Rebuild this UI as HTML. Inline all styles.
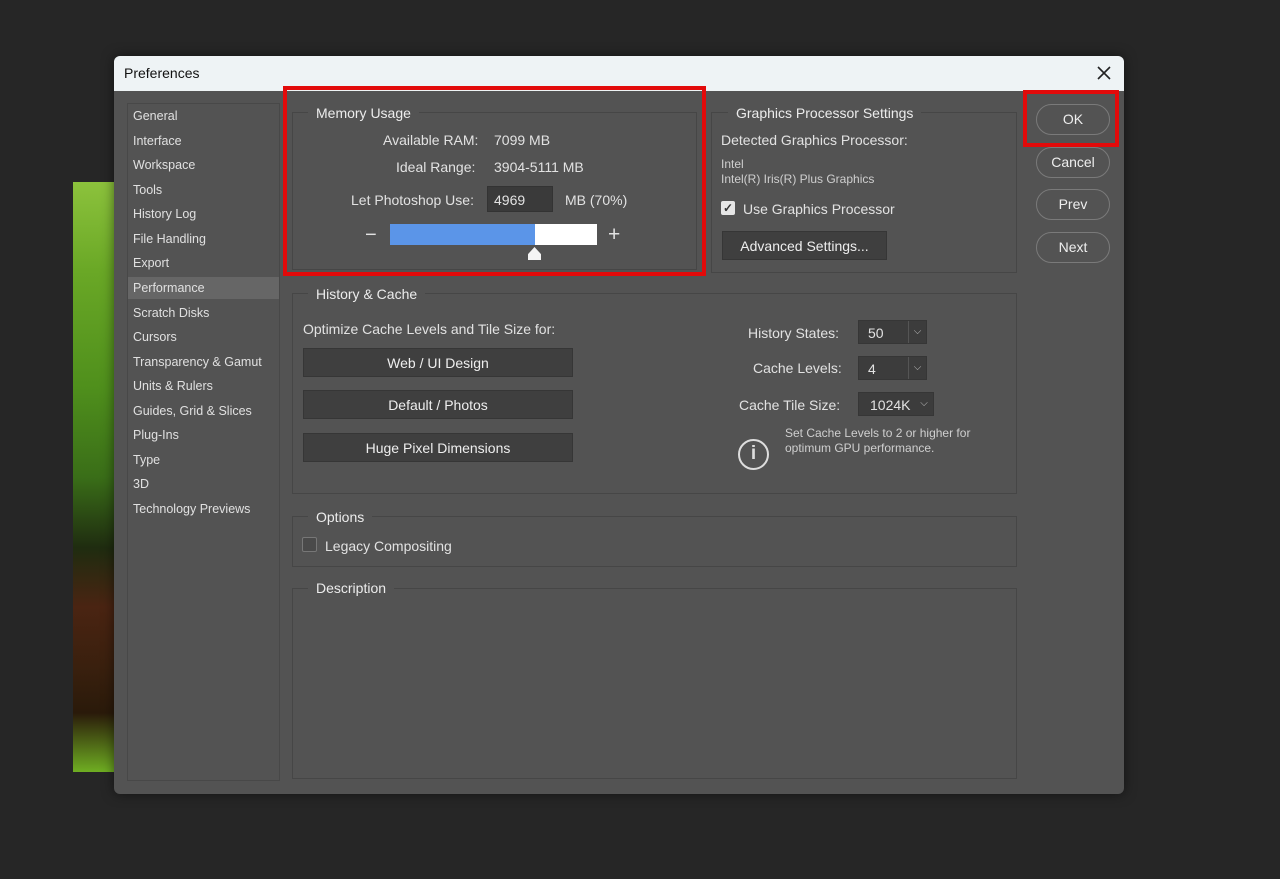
<!DOCTYPE html>
<html><head><style>
*{margin:0;padding:0;box-sizing:border-box}
body{width:1280px;height:879px;background:#262626;font-family:"Liberation Sans",sans-serif;color:#e2e2e2;position:relative;overflow:hidden;font-size:14px}
.a{position:absolute;white-space:nowrap}
.img{left:73px;top:182px;width:45px;height:590px;background:linear-gradient(180deg,#8cc23c 0%,#6aa826 15%,#4f8f1c 35%,#3a6e18 50%,#1f2c10 62%,#4a2412 72%,#3a200e 82%,#2a1a0a 90%,#6fae22 100%)}
.dlg{left:114px;top:56px;width:1010px;height:738px;background:#535353;border-radius:6px;overflow:hidden;box-shadow:0 0 12px rgba(0,0,0,.5)}
.title{left:0;top:0;width:1010px;height:35px;background:#eef3f5;color:#111;font-size:14px;padding:9px 10px}
.side{left:127px;top:103px;width:153px;height:678px;border:1px solid #484848}
.si{left:133px;font-size:12.5px;color:#e0e0e0}
.grp{border:1px solid #464646}
.lg{background:#535353;padding:0 8px;font-size:14px;color:#ececec}
.btn{background:#3f3f3f;border:1px solid #363636;text-align:center;font-size:14px;color:#eee;line-height:29px}
.pill{left:1036px;width:74px;height:31px;border:1.5px solid #7a7a7a;border-radius:16px;text-align:center;line-height:29px;font-size:14px;color:#eee}
.red{border:4px solid #e20a0a}
.sel{background:#3c3c3c;border:1px solid #363636;font-size:14px;padding:4px 9px;height:24px}
.sel b{position:absolute;right:0;top:0;width:18px;height:22px;border-left:1px solid #555;font-weight:normal;font-size:10px;text-align:center;line-height:22px;color:#bbb}
</style></head><body>
<div class="a img"></div>
<div class="a dlg"><div class="a title">Preferences</div>
<svg class="a" style="right:13px;top:10px" width="14" height="14"><path d="M1 1L13 13M13 1L1 13" stroke="#222" stroke-width="1.6"/></svg></div>

<div class="a side"></div>
<div class="a" style="left:128px;top:277px;width:151px;height:22px;background:#666"></div>
<div class="a si" style="top:109px">General</div>
<div class="a si" style="top:134px">Interface</div>
<div class="a si" style="top:158px">Workspace</div>
<div class="a si" style="top:183px">Tools</div>
<div class="a si" style="top:207px">History Log</div>
<div class="a si" style="top:232px">File Handling</div>
<div class="a si" style="top:256px">Export</div>
<div class="a si" style="top:281px">Performance</div>
<div class="a si" style="top:306px">Scratch Disks</div>
<div class="a si" style="top:330px">Cursors</div>
<div class="a si" style="top:355px">Transparency &amp; Gamut</div>
<div class="a si" style="top:379px">Units &amp; Rulers</div>
<div class="a si" style="top:404px">Guides, Grid &amp; Slices</div>
<div class="a si" style="top:428px">Plug-Ins</div>
<div class="a si" style="top:453px">Type</div>
<div class="a si" style="top:477px">3D</div>
<div class="a si" style="top:502px">Technology Previews</div>

<!-- Memory -->
<div class="a grp" style="left:292px;top:112px;width:405px;height:158px"></div>
<div class="a lg" style="left:308px;top:105px">Memory Usage</div>
<div class="a" style="left:383px;top:132px">Available RAM:</div>
<div class="a" style="left:494px;top:132px">7099 MB</div>
<div class="a" style="left:396px;top:159px">Ideal Range:</div>
<div class="a" style="left:494px;top:159px">3904-5111 MB</div>
<div class="a" style="left:351px;top:192px">Let Photoshop Use:</div>
<div class="a" style="left:487px;top:186px;width:66px;height:26px;background:#3a3a3a;border:1px solid #333;padding:5px 6px">4969</div>
<div class="a" style="left:565px;top:192px">MB (70%)</div>
<div class="a" style="left:365px;top:224px;font-size:20px">−</div>
<div class="a" style="left:390px;top:224px;width:207px;height:21px;background:#fff"></div>
<div class="a" style="left:390px;top:224px;width:145px;height:21px;background:#5b95e8"></div>
<div class="a" style="left:528px;top:247px;width:13px;height:13px;background:#f4f4f4;clip-path:polygon(50% 0,100% 55%,100% 100%,0 100%,0 55%)"></div>
<div class="a" style="left:608px;top:223px;font-size:21px">+</div>
<div class="a red" style="left:283px;top:86px;width:423px;height:190px"></div>

<!-- GPU -->
<div class="a grp" style="left:711px;top:112px;width:306px;height:161px"></div>
<div class="a lg" style="left:728px;top:105px">Graphics Processor Settings</div>
<div class="a" style="left:721px;top:132px">Detected Graphics Processor:</div>
<div class="a" style="left:721px;top:157px;font-size:12px;color:#cfcfcf;line-height:15px">Intel<br>Intel(R) Iris(R) Plus Graphics</div>
<div class="a" style="left:721px;top:201px;width:14px;height:14px;background:#e6e6e6;border-radius:2px;color:#333;font-size:12px;text-align:center;line-height:14px;font-weight:bold">✓</div>
<div class="a" style="left:743px;top:201px">Use Graphics Processor</div>
<div class="a btn" style="left:722px;top:231px;width:165px;height:29px">Advanced Settings...</div>

<!-- buttons -->
<div class="a pill" style="top:104px">OK</div>
<div class="a red" style="left:1023px;top:90px;width:96px;height:57px"></div>
<div class="a pill" style="top:147px">Cancel</div>
<div class="a pill" style="top:189px">Prev</div>
<div class="a pill" style="top:232px">Next</div>

<!-- History & Cache -->
<div class="a grp" style="left:292px;top:293px;width:725px;height:201px"></div>
<div class="a lg" style="left:308px;top:286px">History &amp; Cache</div>
<div class="a" style="left:303px;top:321px">Optimize Cache Levels and Tile Size for:</div>
<div class="a btn" style="left:303px;top:348px;width:270px;height:29px">Web / UI Design</div>
<div class="a btn" style="left:303px;top:390px;width:270px;height:29px">Default / Photos</div>
<div class="a btn" style="left:303px;top:433px;width:270px;height:29px">Huge Pixel Dimensions</div>
<div class="a" style="left:748px;top:325px">History States:</div>
<div class="a sel" style="left:858px;top:320px;width:69px">50<b>⌵</b></div>
<div class="a" style="left:753px;top:360px">Cache Levels:</div>
<div class="a sel" style="left:858px;top:356px;width:69px">4<b>⌵</b></div>
<div class="a" style="left:739px;top:397px">Cache Tile Size:</div>
<div class="a sel" style="left:858px;top:392px;width:76px;padding-left:11px">1024K<b style="border:none">⌵</b></div>
<div class="a" style="left:738px;top:439px;width:31px;height:31px;border:2.5px solid #ddd;border-radius:50%;text-align:center;font-size:19px;line-height:26px;font-weight:bold;color:#ddd">i</div>
<div class="a" style="left:785px;top:426px;font-size:12px;color:#cfcfcf;line-height:15px">Set Cache Levels to 2 or higher for<br>optimum GPU performance.</div>

<!-- Options -->
<div class="a grp" style="left:292px;top:516px;width:725px;height:51px"></div>
<div class="a lg" style="left:308px;top:509px">Options</div>
<div class="a" style="left:302px;top:537px;width:15px;height:15px;border:1px solid #777;border-radius:2px;background:#4a4a4a"></div>
<div class="a" style="left:325px;top:538px">Legacy Compositing</div>

<!-- Description -->
<div class="a grp" style="left:292px;top:588px;width:725px;height:191px"></div>
<div class="a lg" style="left:308px;top:580px">Description</div>
</body></html>
